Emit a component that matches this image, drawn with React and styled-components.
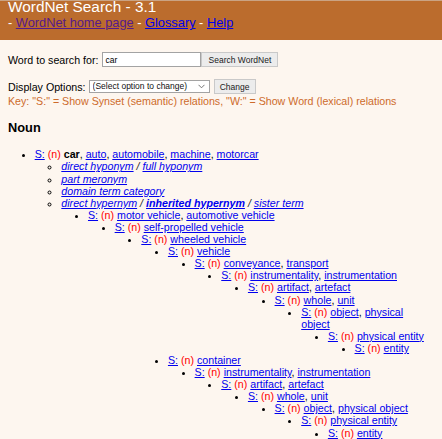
import React from 'react';
import styled, { createGlobalStyle } from 'styled-components';

const Global = createGlobalStyle`
  html, body { margin: 0; padding: 0; background: #fdf6ef; }
  body { font-family: "Liberation Sans", Arial, sans-serif; font-size: 10.67px; color: #000; overflow: hidden; }
`;

const Page = styled.div`
  width: 442px;
  height: 439px;
  overflow: hidden;
  background: #fdf6ef;
`;

const Header = styled.header`
  background: #bb6c2d;
  border-top: 1px solid #caa383;
  padding: 0 8px 10px;
  color: #fff;
`;

const Title = styled.div`
  margin-top: -3px;
  font-size: 15.36px;
  line-height: 17px;
`;

const NavLine = styled.div`
  font-size: 12.8px;
  line-height: 15px;
`;

const NavLink = styled.a`
  color: ${p => (p.$visited ? '#551a8b' : '#0000ee')};
  text-decoration: underline;
`;

const Content = styled.main`
  padding: 12px 8px 0;
`;

const FormRow = styled.div`
  display: flex;
  align-items: center;
  height: 15px;
  margin-bottom: ${p => p.$gap || 0}px;
  gap: ${p => p.$inner || 0}px;
`;

const Label = styled.span`
  font-size: 10.67px;
  margin-right: ${p => p.$space}px;
`;

const TextInput = styled.input`
  box-sizing: border-box;
  width: 99px;
  height: 15px;
  margin: 0;
  padding: 0 2px;
  border: 1px solid #a3a3a3;
  background: #fff;
  font-family: "Liberation Sans", Arial, sans-serif;
  font-size: 8.5px;
  color: #000;
  outline: none;
`;

const Button = styled.button`
  box-sizing: border-box;
  width: ${p => p.$w}px;
  height: 15px;
  margin: 0;
  padding: 0;
  border: 1px solid #c9c9c9;
  background: #ececec;
  font-family: "Liberation Sans", Arial, sans-serif;
  font-size: 8.5px;
  color: #1a1a1a;
`;

const SelectWrap = styled.span`
  position: relative;
  display: inline-flex;
  margin-right: 4px;
`;

const Select = styled.select`
  appearance: none;
  -webkit-appearance: none;
  box-sizing: border-box;
  width: 121px;
  height: 13px;
  margin: 0;
  padding: 0 0 0 3px;
  border: 1px solid #a3a3a3;
  border-radius: 0;
  background: #fff;
  font-family: "Liberation Sans", Arial, sans-serif;
  font-size: 8.5px;
  line-height: 11px;
  color: #111;
`;

const Chevron = styled.svg`
  position: absolute;
  right: 5px;
  top: 4px;
  pointer-events: none;
`;

const KeyLine = styled.div`
  margin-top: 1px;
  line-height: 12px;
  color: #cd6b2b;
`;

const PosHeading = styled.h3`
  margin: 13px 0 0;
  font-size: 12.8px;
  line-height: 15px;
  font-weight: bold;
`;

const Tree = styled.ul`
  margin: 0;
  padding-left: 26.67px;
  list-style-type: ${p => p.$type || 'disc'};
  &:first-of-type { }
`;

const TopTree = styled(Tree)`
  margin-top: 13.4px;
`;

const Item = styled.li`
  line-height: 12.1px;
`;

const SLink = styled.a`
  color: #0000ee;
  text-decoration: underline;
  font-style: ${p => (p.$italic ? 'italic' : 'normal')};
  font-weight: ${p => (p.$bold ? 'bold' : 'normal')};
`;

const Pos = styled.span`
  color: #ff0000;
`;

const Head = styled.b`
  font-weight: bold;
`;

const Slash = styled.span`
  font-style: italic;
  color: #222;
`;

function Words({ words }) {
  return words.map((w, i) => (
    <React.Fragment key={i}>
      {i > 0 && ', '}
      {w.head ? <Head>{w.text}</Head> : <SLink href="#">{w.text}</SLink>}
    </React.Fragment>
  ));
}

function Synset({ node }) {
  return (
    <Item>
      <SLink href="#">S:</SLink> <Pos>(n)</Pos> <Words words={node.words.map(t => (typeof t === 'string' ? { text: t } : t))} />
      {node.kids && node.kids.length > 0 && (
        <Tree>
          {node.kids.map((k, i) => (
            <Synset key={i} node={k} />
          ))}
        </Tree>
      )}
    </Item>
  );
}

const chain = (list) => {
  let node = null;
  for (let i = list.length - 1; i >= 0; i--) {
    node = { words: list[i], kids: node ? [node] : [] };
  }
  return node;
};

const upper = [
  ['instrumentality', 'instrumentation'],
  ['artifact', 'artefact'],
  ['whole', 'unit'],
  ['object', 'physical object'],
  ['physical entity'],
  ['entity'],
];

const vehicleBranch = chain([['vehicle'], ['conveyance', 'transport'], ...upper]);
const containerBranch = chain([['container'], ...upper]);

const hypernyms = {
  words: ['motor vehicle', 'automotive vehicle'],
  kids: [
    {
      words: ['self-propelled vehicle'],
      kids: [
        {
          words: ['wheeled vehicle'],
          kids: [vehicleBranch, containerBranch],
        },
      ],
    },
  ],
};

export default function App() {
  return (
    <Page>
      <Global />
      <Header>
        <Title>WordNet Search - 3.1</Title>
        <NavLine>
          - <NavLink href="#" $visited>WordNet home page</NavLink> - <NavLink href="#">Glossary</NavLink> - <NavLink href="#">Help</NavLink>
        </NavLine>
      </Header>
      <Content>
        <FormRow $gap={12}>
          <Label $space={4}>Word to search for:</Label>
          <TextInput defaultValue="car" />
          <Button $w={77}>Search WordNet</Button>
        </FormRow>
        <FormRow>
          <Label $space={3}>Display Options:</Label>
          <SelectWrap>
            <Select defaultValue="">
              <option value="">(Select option to change)</option>
            </Select>
            <Chevron width="7" height="5" viewBox="0 0 7 5">
              <polyline points="0.5,0.8 3.5,3.8 6.5,0.8" fill="none" stroke="#666" strokeWidth="0.9" />
            </Chevron>
          </SelectWrap>
          <Button $w={42}>Change</Button>
        </FormRow>
        <KeyLine>Key: "S:" = Show Synset (semantic) relations, "W:" = Show Word (lexical) relations</KeyLine>
        <PosHeading>Noun</PosHeading>
        <TopTree>
          <Item>
            <SLink href="#">S:</SLink> <Pos>(n)</Pos>{' '}
            <Words
              words={[
                { text: 'car', head: true },
                { text: 'auto' },
                { text: 'automobile' },
                { text: 'machine' },
                { text: 'motorcar' },
              ]}
            />
            <Tree $type="circle">
              <Item>
                <SLink href="#" $italic>direct hyponym</SLink> <Slash>/</Slash> <SLink href="#" $italic>full hyponym</SLink>
              </Item>
              <Item>
                <SLink href="#" $italic>part meronym</SLink>
              </Item>
              <Item>
                <SLink href="#" $italic>domain term category</SLink>
              </Item>
              <Item>
                <SLink href="#" $italic>direct hypernym</SLink> <Slash>/</Slash>{' '}
                <SLink href="#" $italic $bold>inherited hypernym</SLink> <Slash>/</Slash>{' '}
                <SLink href="#" $italic>sister term</SLink>
                <Tree>
                  <Synset node={hypernyms} />
                </Tree>
              </Item>
            </Tree>
          </Item>
        </TopTree>
      </Content>
    </Page>
  );
}
